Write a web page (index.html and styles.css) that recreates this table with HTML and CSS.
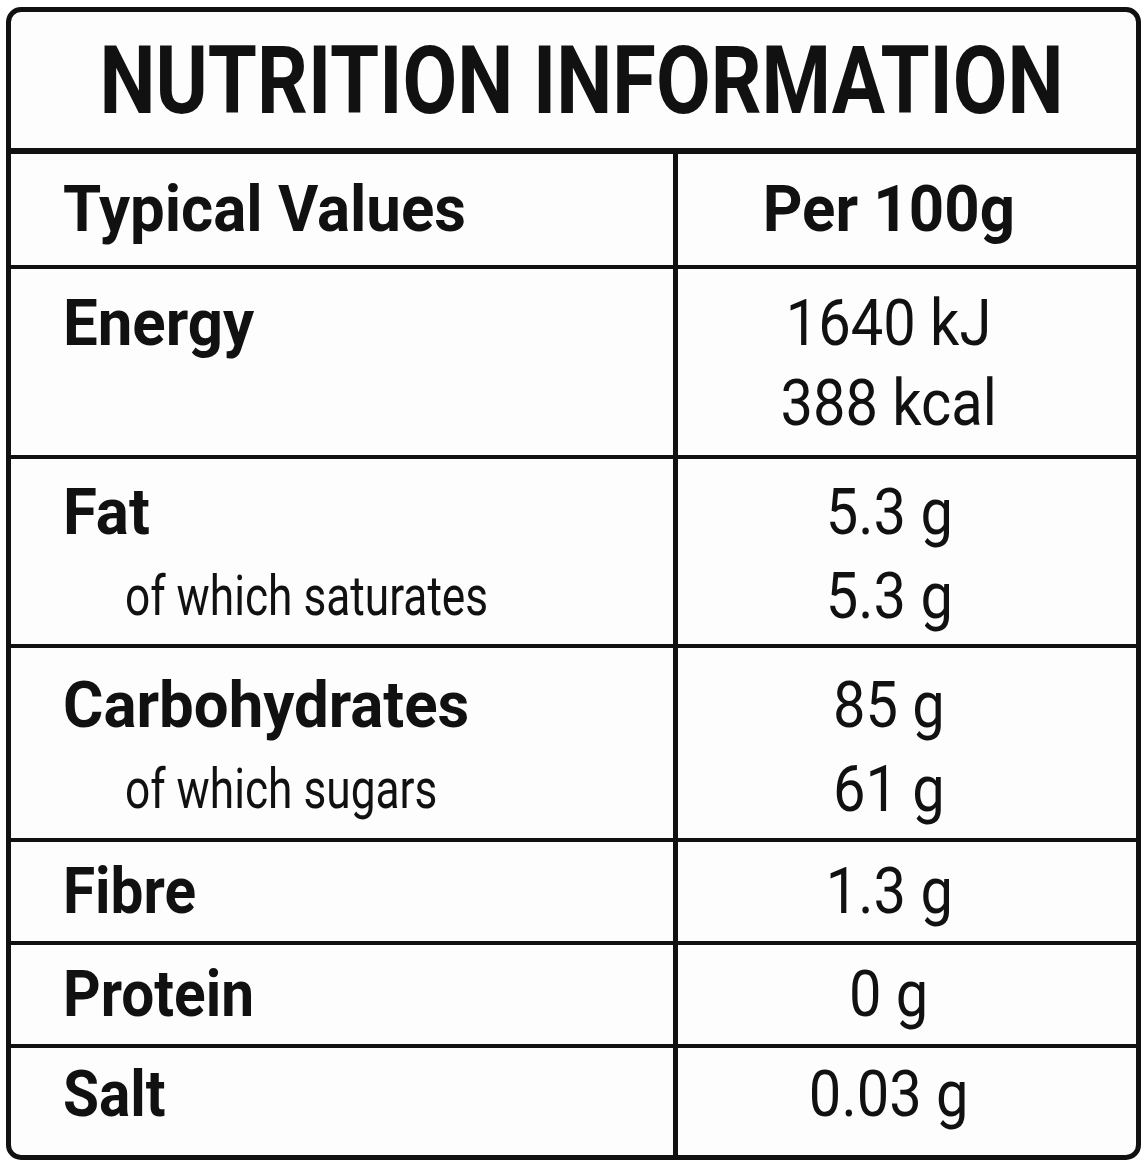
FILE: index.html
```html
<!DOCTYPE html>
<html lang="en">
<head>
<meta charset="utf-8">
<title>Nutrition Information</title>
<link rel="stylesheet" href="styles.css">
</head>
<body>
<div class="label">
  <h1 class="title"><span class="sq-title">NUTRITION INFORMATION</span></h1>

  <div class="row row-head">
    <div class="cell name"><span class="sq-bold">Typical Values</span></div>
    <div class="cell val"><span class="sq-bold">Per 100g</span></div>
  </div>

  <div class="row row-energy">
    <div class="cell name"><span class="sq-bold">Energy</span></div>
    <div class="cell val">
      <div><span class="sq-val">1640 kJ</span></div>
      <div><span class="sq-val">388 kcal</span></div>
    </div>
  </div>

  <div class="row row-fat">
    <div class="cell name">
      <div><span class="sq-bold">Fat</span></div>
      <div class="sub"><span class="sq-sub">of which saturates</span></div>
    </div>
    <div class="cell val">
      <div><span class="sq-val">5.3 g</span></div>
      <div><span class="sq-val">5.3 g</span></div>
    </div>
  </div>

  <div class="row row-carb">
    <div class="cell name">
      <div><span class="sq-bold">Carbohydrates</span></div>
      <div class="sub"><span class="sq-sub">of which sugars</span></div>
    </div>
    <div class="cell val">
      <div><span class="sq-val">85 g</span></div>
      <div><span class="sq-val">61 g</span></div>
    </div>
  </div>

  <div class="row row-single">
    <div class="cell name"><span class="sq-bold sq-tight">Fibre</span></div>
    <div class="cell val"><span class="sq-val">1.3 g</span></div>
  </div>

  <div class="row row-single">
    <div class="cell name"><span class="sq-bold sq-tight">Protein</span></div>
    <div class="cell val"><span class="sq-val">0 g</span></div>
  </div>

  <div class="row row-salt">
    <div class="cell name"><span class="sq-bold sq-tight">Salt</span></div>
    <div class="cell val"><span class="sq-val">0.03 g</span></div>
  </div>
</div>
</body>
</html>
```

FILE: styles.css
```css
* { box-sizing: border-box; }

html, body {
  margin: 0;
  padding: 0;
  background: #ffffff;
}

body {
  padding: 7px 0 0 6px;
  font-family: Roboto, "Liberation Sans", Arial, sans-serif;
  color: #111111;
}

.label {
  width: 1135px;
  border: 5px solid #111111;
  border-radius: 15px;
  background: #fdfdfd;
  overflow: hidden;
}

.title {
  margin: 0;
  height: 142px;
  padding-top: 3px;
  border-bottom: 6px solid #111111;
  font-size: 94px;
  line-height: 133px;
  font-weight: 700;
  text-align: center;
}

.sq-title {
  display: inline-block;
  transform: scaleX(0.845);
  transform-origin: center;
  white-space: nowrap;
}

.row {
  display: grid;
  grid-template-columns: 662px 1fr;
  border-bottom: 4px solid #111111;
  font-size: 65px;
  line-height: 81px;
}

.row:last-child { border-bottom: none; }

.cell.name {
  padding-left: 52px;
  font-weight: 700;
}

.cell.val {
  border-left: 5px solid #111111;
  text-align: center;
  padding-right: 36px;
  font-weight: 400;
}

.sq-bold {
  display: inline-block;
  transform: scaleX(0.95);
  transform-origin: left center;
  white-space: nowrap;
  font-weight: 700;
}

.sq-bold.sq-tight { transform: scaleX(0.9); }

.cell.val .sq-bold { transform-origin: center; }

.sq-val {
  display: inline-block;
  transform: scaleX(0.89);
  transform-origin: center;
  white-space: nowrap;
}

.sub {
  padding-left: 62px;
  font-size: 56px;
  font-weight: 400;
}

.sq-sub {
  display: inline-block;
  transform: scaleX(0.79);
  transform-origin: left center;
  white-space: nowrap;
}

.row-head .cell { padding-top: 15px; padding-bottom: 15px; }

.row-energy { line-height: 80px; }
.row-energy .cell { padding-top: 14px; padding-bottom: 12px; }

.row-fat { line-height: 84px; }
.row-fat .cell { padding-top: 11px; padding-bottom: 6px; }

.row-carb { line-height: 84px; }
.row-carb .cell { padding-top: 15px; padding-bottom: 7px; }

.row-single .cell { padding-top: 9px; padding-bottom: 9px; }

.row-salt .cell { padding-top: 6px; padding-bottom: 20px; }
```
